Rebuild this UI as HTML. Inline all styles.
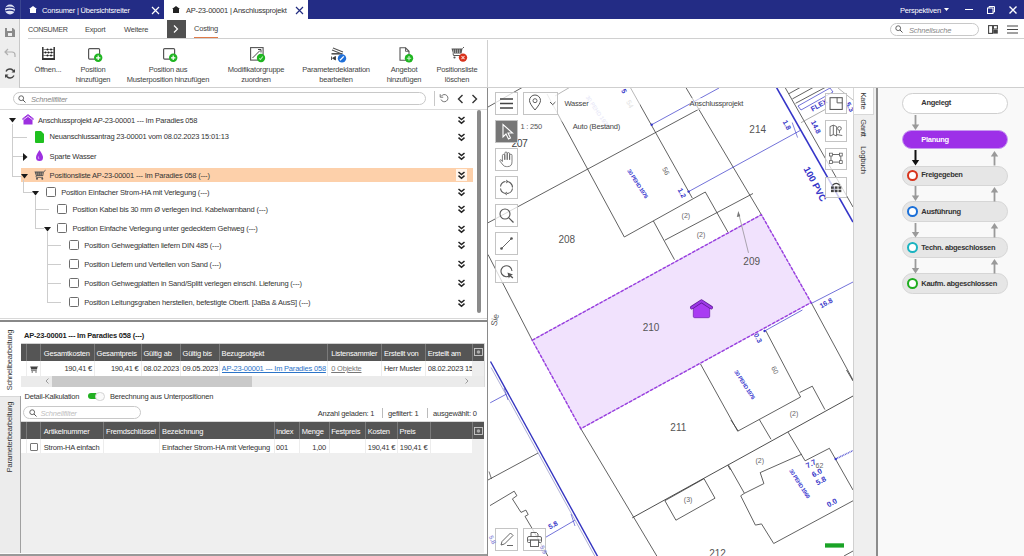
<!DOCTYPE html>
<html><head><meta charset="utf-8">
<style>
*{margin:0;padding:0;box-sizing:border-box}
html,body{width:1024px;height:556px;overflow:hidden;background:#fff;font-family:"Liberation Sans",sans-serif;color:#333;position:relative}
.a{position:absolute;white-space:nowrap}
.t{font-size:7.5px;letter-spacing:-0.2px;line-height:12.4px}
.tb{font-size:7.5px;letter-spacing:-0.2px;line-height:9.6px;text-align:center;color:#444;white-space:nowrap}
svg{position:absolute;overflow:visible}
</style></head><body>

<!-- TITLE BAR -->
<div class="a" style="left:0;top:0;width:1024px;height:19px;background:#232c85"></div>
<div class="a" style="left:164px;top:0;width:144px;height:19px;background:#fff"></div>
<div class="a" style="left:20px;top:0;width:1px;height:19px;background:#3a4590"></div>
<!-- globe logo -->
<svg style="left:0;top:0" width="20" height="19" viewBox="0 0 20 19">
 <circle cx="10" cy="9.5" r="5" fill="#dfe3f5"/>
 <path d="M5 8 Q10 6 15 8.5 M5.2 11 Q10 9 14.8 11.5" stroke="#232d80" stroke-width="1.1" fill="none"/>
</svg>
<svg style="left:28px;top:5px" width="10" height="9" viewBox="0 0 10 9"><path d="M1 4 L5 1 L9 4 L8 4 L8 8 L2 8 L2 4Z" fill="#fff"/></svg>
<div class="a t" style="left:42px;top:5px;color:#fff;font-size:7.5px">Consumer | Übersichtsreiter</div>
<svg style="left:151px;top:5.5px" width="9" height="9" viewBox="0 0 9 9"><path d="M1 1L8 8M8 1L1 8" stroke="#fff" stroke-width="1.2"/></svg>
<svg style="left:171px;top:5px" width="10" height="9" viewBox="0 0 10 9"><path d="M1 4 L5 1 L9 4 L8 4 L8 8 L2 8 L2 4Z" fill="#222"/></svg>
<div class="a t" style="left:186px;top:5px;color:#333;font-size:7.5px">AP-23-00001 | Anschlussprojekt</div>
<svg style="left:295px;top:5.5px" width="9" height="9" viewBox="0 0 9 9"><path d="M1 1L8 8M8 1L1 8" stroke="#232d80" stroke-width="1.2"/></svg>
<div class="a t" style="left:900px;top:5px;color:#fff;font-size:7.5px">Perspektiven</div>
<svg style="left:944px;top:8px" width="5" height="3"><path d="M0 0L5 0L2.5 3Z" fill="#fff"/></svg>
<div class="a" style="left:965px;top:9px;width:8px;height:1.3px;background:#fff"></div>
<svg style="left:987px;top:6px" width="8" height="8" viewBox="0 0 8 8"><rect x="0.5" y="2" width="5.5" height="5.5" fill="none" stroke="#fff" stroke-width="1"/><path d="M2 2V0.5H7.5V6H6" fill="none" stroke="#fff" stroke-width="1"/></svg>
<svg style="left:1009px;top:6px" width="8" height="8" viewBox="0 0 8 8"><path d="M0.5 0.5L7.5 7.5M7.5 0.5L0.5 7.5" stroke="#fff" stroke-width="1.4"/></svg>

<!-- LEFT COLUMN (toolbar) -->
<div class="a" style="left:0;top:19px;width:20px;height:69px;background:#eeeeee;border-right:1px solid #c8c8c8"></div>

<!-- RIBBON TABS -->
<div class="a t" style="left:28px;top:24px;font-size:7.2px;letter-spacing:-0.3px;color:#444">CONSUMER</div>
<div class="a t" style="left:85px;top:24px;font-size:7.5px;color:#444">Export</div>
<div class="a t" style="left:124px;top:24px;font-size:7.5px;color:#444">Weitere</div>
<div class="a" style="left:167px;top:20px;width:19px;height:18px;background:#505050"></div>
<svg style="left:173px;top:25px" width="6" height="8" viewBox="0 0 6 8"><path d="M1 0.5L4.5 4L1 7.5" stroke="#fff" stroke-width="1.2" fill="none"/></svg>
<div class="a t" style="left:194px;top:23px;font-size:7.5px;color:#444">Costing</div>
<div class="a" style="left:194px;top:37px;width:24px;height:2px;background:#e07a48"></div>
<div class="a" style="left:28px;top:38px;width:996px;height:1px;background:#d0d0d0"></div>
<div class="a" style="left:890px;top:22.5px;width:89px;height:13px;border:1px solid #c8c8c8;border-radius:7px;background:#fff"></div>
<div class="a t" style="left:909px;top:24.5px;color:#888;font-style:italic;font-size:7.5px">Schnellsuche</div>

<!-- TOOLBAR -->
<!-- left column icons -->
<svg style="left:4px;top:27px" width="12" height="11" viewBox="0 0 12 11"><path d="M1 1H9L11 3V10H1Z" fill="#8a8a8a"/><rect x="3" y="1" width="5" height="3" fill="#eee"/><rect x="4" y="6" width="4" height="3" fill="#eee"/></svg>
<svg style="left:4px;top:48px" width="12" height="10" viewBox="0 0 12 10"><path d="M4 1L1 4L4 7M1 4H8Q11 4 11 7V9" fill="none" stroke="#b0b0b0" stroke-width="1.2"/></svg>
<svg style="left:4px;top:67.5px" width="12" height="11" viewBox="0 0 12 11"><path d="M10 4A4.3 4.3 0 0 0 2 3.5M2 7A4.3 4.3 0 0 0 10 7.5" fill="none" stroke="#444" stroke-width="1.3"/><path d="M11 1V4.5H7.5Z M1 10V6.5H4.5Z" fill="#444"/></svg>

<!-- toolbar icons -->
<svg style="left:42px;top:47px" width="13" height="13" viewBox="0 0 13 13">
 <path d="M0.8 0V13 M12.2 0V13" stroke="#333" stroke-width="1.5"/><rect x="0" y="11" width="13" height="2" fill="#333"/>
 <path d="M1 2.5H12M1 5.5H12M1 8.5H12" stroke="#555" stroke-width="0.7"/>
 <circle cx="5.5" cy="2.5" r="1" fill="#222"/><circle cx="9" cy="2.5" r="1" fill="#222"/>
 <circle cx="3.5" cy="5.5" r="1" fill="#222"/><circle cx="6.5" cy="5.5" r="1" fill="#222"/><circle cx="9.5" cy="5.5" r="1" fill="#222"/>
 <circle cx="5.5" cy="8.5" r="1" fill="#222"/><circle cx="9" cy="8.5" r="1" fill="#222"/>
</svg>
<svg style="left:88px;top:48px" width="16" height="15" viewBox="0 0 16 15"><rect x="0.6" y="0.6" width="11" height="10.5" rx="1" fill="#fff" stroke="#555" stroke-width="1.2"/><circle cx="10.2" cy="9.8" r="4.2" fill="#1fb521"/><path d="M10.2 7.6V12M8 9.8H12.4" stroke="#fff" stroke-width="1.2"/></svg>
<svg style="left:163px;top:48px" width="16" height="15" viewBox="0 0 16 15"><rect x="0.6" y="0.6" width="11" height="10.5" rx="1" fill="#fff" stroke="#555" stroke-width="1.2"/><circle cx="10.2" cy="9.8" r="4.2" fill="#1fb521"/><path d="M10.2 7.6V12M8 9.8H12.4" stroke="#fff" stroke-width="1.2"/></svg>
<svg style="left:250px;top:46.5px" width="16" height="16" viewBox="0 0 16 16"><rect x="0.6" y="0.6" width="12.5" height="12.5" fill="#fff" stroke="#555" stroke-width="1.1"/><path d="M2.5 11L10 3.5M8 2.5H11V5.5" stroke="#444" stroke-width="1" fill="none"/><circle cx="11" cy="11" r="4.2" fill="#1fb521"/><path d="M9.3 11.3L10.5 12.5L12.8 9.5" stroke="#bff0bf" stroke-width="1.1" fill="none"/></svg>
<svg style="left:330px;top:46.5px" width="17" height="16" viewBox="0 0 17 16"><path d="M3 1L13 5M2 3L12 7" stroke="#555" stroke-width="1.1"/><rect x="1.5" y="6" width="11" height="1.6" fill="#555"/><path d="M1.5 9.5V13M5.5 9.5V13L2.5 11.2Z" fill="#333" stroke="#333" stroke-width="0.8"/><circle cx="12" cy="11.4" r="4.2" fill="#1e6fd9"/><path d="M10 13.2L13.8 9.4" stroke="#fff" stroke-width="1.3"/></svg>
<svg style="left:399px;top:46.5px" width="16" height="16" viewBox="0 0 16 16"><path d="M1 0.8H6.5L10 4.3V13.2H1Z" fill="#fff" stroke="#555" stroke-width="1.1"/><path d="M6.5 0.8V4.3H10" fill="none" stroke="#555" stroke-width="0.9"/><circle cx="10" cy="11.3" r="4.2" fill="#1fb521"/><path d="M10 9.1V13.5M7.8 11.3H12.2" stroke="#cdf5cd" stroke-width="1.1"/></svg>
<svg style="left:451px;top:47px" width="16" height="15" viewBox="0 0 16 15"><path d="M0.5 1.5H11.5L10.5 6.5H2Z" fill="#555"/><path d="M2.6 2.5V6M4.6 2.5V6M6.6 2.5V6M8.6 2.5V6" stroke="#ddd" stroke-width="0.6"/><path d="M11.5 1.5L13 0" stroke="#555" stroke-width="1"/><path d="M2 6.5L2.5 8.5H9" stroke="#555" stroke-width="1" fill="none"/><circle cx="3.5" cy="10.5" r="1.1" fill="#555"/><circle cx="12" cy="10.6" r="4.2" fill="#d8321c"/><path d="M10.5 9.1L13.5 12.1M13.5 9.1L10.5 12.1" stroke="#fbd0c8" stroke-width="1.1"/></svg>

<!-- toolbar labels -->
<div class="a tb" style="left:8px;top:65px;width:80px">Öffnen...</div>
<div class="a tb" style="left:53px;top:65px;width:80px">Position<br>hinzufügen</div>
<div class="a tb" style="left:108px;top:65px;width:120px">Position aus<br>Musterposition hinzufügen</div>
<div class="a tb" style="left:206px;top:65px;width:100px">Modifikatorgruppe<br>zuordnen</div>
<div class="a tb" style="left:286px;top:65px;width:100px">Parameterdeklaration<br>bearbeiten</div>
<div class="a tb" style="left:364px;top:65px;width:80px">Angebot<br>hinzufügen</div>
<div class="a tb" style="left:417px;top:65px;width:80px">Positionsliste<br>löschen</div>

<!-- ribbon right icons -->
<svg style="left:895px;top:25px" width="8" height="8" viewBox="0 0 8 8"><circle cx="3.2" cy="3.2" r="2.4" fill="none" stroke="#555" stroke-width="0.9"/><path d="M5 5L7.5 7.5" stroke="#555" stroke-width="1"/></svg>
<svg style="left:988px;top:24.5px" width="10" height="9" viewBox="0 0 10 9"><rect x="0.6" y="0.6" width="4" height="7.8" fill="none" stroke="#444" stroke-width="1.1"/><rect x="5.4" y="0.6" width="4" height="3.4" fill="none" stroke="#444" stroke-width="1.1"/><rect x="5.2" y="4.8" width="4.6" height="3.8" fill="#444"/></svg>
<svg style="left:1007px;top:24.5px" width="11" height="9" viewBox="0 0 11 9"><path d="M0 1H11M0 4.5H11M0 8H11" stroke="#444" stroke-width="1.2"/></svg>

<div class="a" style="left:20px;top:87px;width:1004px;height:1px;background:#cfcfcf"></div>
<div class="a" style="left:487px;top:40px;width:1px;height:47px;background:#cfcfcf"></div>

<!-- LEFT PANEL -->
<div class="a" style="left:0;top:109px;width:487px;height:1px;background:#dcdcdc"></div>
<div class="a" style="left:13px;top:92px;width:413px;height:13px;border:1px solid #c8c8c8;border-radius:7px"></div>
<div class="a t" style="left:31px;top:93.5px;color:#888;font-style:italic">Schnellfilter</div>


<!-- TREE -->
<div class="a" style="left:21px;top:168px;width:452px;height:14px;background:#fdd0aa"></div>
<div class="a" style="left:456px;top:169px;width:11px;height:12px;background:#fff5ec"></div>
<div class="a" style="left:12px;top:124px;width:1px;height:52px;background:#cdcdcd"></div>
<div class="a" style="left:12px;top:137px;width:15px;height:1px;background:#cdcdcd"></div>
<div class="a" style="left:12px;top:156px;width:11px;height:1px;background:#cdcdcd"></div>
<div class="a" style="left:12px;top:176px;width:9px;height:1px;background:#cdcdcd"></div>
<div class="a" style="left:23px;top:180px;width:1px;height:13px;background:#cdcdcd"></div>
<div class="a" style="left:23px;top:192px;width:10px;height:1px;background:#cdcdcd"></div>
<div class="a" style="left:35px;top:196px;width:1px;height:33px;background:#cdcdcd"></div>
<div class="a" style="left:35px;top:209px;width:14px;height:1px;background:#cdcdcd"></div>
<div class="a" style="left:35px;top:228px;width:9px;height:1px;background:#cdcdcd"></div>
<div class="a" style="left:47px;top:232px;width:1px;height:71px;background:#cdcdcd"></div>
<div class="a" style="left:47px;top:245px;width:14px;height:1px;background:#cdcdcd"></div>
<div class="a" style="left:47px;top:264px;width:14px;height:1px;background:#cdcdcd"></div>
<div class="a" style="left:47px;top:283px;width:14px;height:1px;background:#cdcdcd"></div>
<div class="a" style="left:47px;top:302px;width:14px;height:1px;background:#cdcdcd"></div>
<svg style="left:9px;top:118px" width="7" height="5" viewBox="0 0 7 5"><path d="M0 0H7L3.5 4.5Z" fill="#1a1a1a"/></svg>
<svg style="left:21px;top:174px" width="7" height="5" viewBox="0 0 7 5"><path d="M0 0H7L3.5 4.5Z" fill="#1a1a1a"/></svg>
<svg style="left:32px;top:190.5px" width="7" height="5" viewBox="0 0 7 5"><path d="M0 0H7L3.5 4.5Z" fill="#1a1a1a"/></svg>
<svg style="left:43.5px;top:226.5px" width="7" height="5" viewBox="0 0 7 5"><path d="M0 0H7L3.5 4.5Z" fill="#1a1a1a"/></svg>
<svg style="left:23px;top:152.5px" width="5" height="8" viewBox="0 0 5 8"><path d="M0 0V8L4.5 4Z" fill="#1a1a1a"/></svg>
<svg style="left:22px;top:114px" width="12" height="11" viewBox="0 0 12 11"><path d="M0 5.5L6 0.8L12 5.5L10.5 5.5V10.5H1.5V5.5Z" fill="#9d30e0"/><path d="M0.3 5L6 0.6L11.7 5" fill="none" stroke="#9d30e0" stroke-width="1"/><path d="M1.7 5.6L6 2.4L10.3 5.6" fill="none" stroke="#fff" stroke-width="0.8"/></svg>
<svg style="left:35px;top:130.5px" width="9" height="12" viewBox="0 0 9 12"><path d="M0 1Q0 0 1 0H6L9 3V11Q9 12 8 12H1Q0 12 0 11Z" fill="#1fc01f"/></svg>
<svg style="left:36px;top:150px" width="7" height="11" viewBox="0 0 7 11"><path d="M3.5 0Q7 5 7 7.5A3.5 3.5 0 0 1 0 7.5Q0 5 3.5 0Z" fill="#9d30e0"/><path d="M2.5 6.5Q2 8 3 9" stroke="#e7c8ff" stroke-width="0.7" fill="none"/></svg>
<svg style="left:33.5px;top:170px" width="12" height="10" viewBox="0 0 12 10"><path d="M0.5 1.5H10L9.2 6H2Z" fill="#555"/><path d="M2.8 2.5V5.2M4.8 2.5V5.2M6.8 2.5V5.2M8.6 2.5V5.2" stroke="#fdd0aa" stroke-width="0.5"/><path d="M10 1.5L11.5 0.3" stroke="#555" stroke-width="1"/><path d="M2 6L2.3 7.3H9" stroke="#555" stroke-width="0.9" fill="none"/><circle cx="3" cy="8.8" r="1" fill="#555"/><circle cx="8.3" cy="8.8" r="1" fill="#555"/></svg>
<div class="a" style="left:45.8px;top:187px;width:10px;height:10px;border:1px solid #6d6d6d;border-radius:1.5px;background:#fff"></div>
<div class="a" style="left:57.3px;top:203.8px;width:10px;height:10px;border:1px solid #6d6d6d;border-radius:1.5px;background:#fff"></div>
<div class="a" style="left:57.3px;top:223.3px;width:10px;height:10px;border:1px solid #6d6d6d;border-radius:1.5px;background:#fff"></div>
<div class="a" style="left:69.3px;top:240px;width:10px;height:10px;border:1px solid #6d6d6d;border-radius:1.5px;background:#fff"></div>
<div class="a" style="left:69.3px;top:259px;width:10px;height:10px;border:1px solid #6d6d6d;border-radius:1.5px;background:#fff"></div>
<div class="a" style="left:69.3px;top:278px;width:10px;height:10px;border:1px solid #6d6d6d;border-radius:1.5px;background:#fff"></div>
<div class="a" style="left:69.3px;top:297.3px;width:10px;height:10px;border:1px solid #6d6d6d;border-radius:1.5px;background:#fff"></div>
<div class="a t" style="left:38px;top:114.8px;color:#333">Anschlussprojekt AP-23-00001 --- Im Paradies 058</div>
<div class="a t" style="left:49.6px;top:131.3px;color:#333">Neuanschlussantrag 23-00001 vom 08.02.2023 15:01:13</div>
<div class="a t" style="left:49.6px;top:150.7px;color:#333">Sparte Wasser</div>
<div class="a t" style="left:49.6px;top:169.5px;color:#333">Positionsliste AP-23-00001 --- Im Paradies 058 (---)</div>
<div class="a t" style="left:61.2px;top:186.7px;color:#333">Position Einfacher Strom-HA mit Verlegung (---)</div>
<div class="a t" style="left:72.5px;top:203.8px;color:#333">Position Kabel bis 30 mm Ø verlegen incl. Kabelwarnband (---)</div>
<div class="a t" style="left:72.5px;top:223.0px;color:#333">Position Einfache Verlegung unter gedecktem Gehweg (---)</div>
<div class="a t" style="left:84.2px;top:239.5px;color:#333">Position Gehwegplatten liefern DIN 485 (---)</div>
<div class="a t" style="left:84.2px;top:258.7px;color:#333">Position Liefern und Verteilen von Sand (---)</div>
<div class="a t" style="left:84.2px;top:277.7px;color:#333">Position Gehwegplatten in Sand/Splitt verlegen einschl. Lieferung (---)</div>
<div class="a t" style="left:84.2px;top:297.0px;color:#333">Position Leitungsgraben herstellen, befestigte Oberfl. [JaBa &amp; AusS] (---)</div>
<svg style="left:457px;top:116.3px" width="9" height="9" viewBox="0 0 9 9"><path d="M1.5 1L4.5 3.6L7.5 1M1.5 4.6L4.5 7.2L7.5 4.6" fill="none" stroke="#222" stroke-width="1.5"/></svg>
<svg style="left:457px;top:132.8px" width="9" height="9" viewBox="0 0 9 9"><path d="M1.5 1L4.5 3.6L7.5 1M1.5 4.6L4.5 7.2L7.5 4.6" fill="none" stroke="#222" stroke-width="1.5"/></svg>
<svg style="left:457px;top:152.2px" width="9" height="9" viewBox="0 0 9 9"><path d="M1.5 1L4.5 3.6L7.5 1M1.5 4.6L4.5 7.2L7.5 4.6" fill="none" stroke="#222" stroke-width="1.5"/></svg>
<svg style="left:457px;top:171.0px" width="9" height="9" viewBox="0 0 9 9"><path d="M1.5 1L4.5 3.6L7.5 1M1.5 4.6L4.5 7.2L7.5 4.6" fill="none" stroke="#222" stroke-width="1.5"/></svg>
<svg style="left:457px;top:188.2px" width="9" height="9" viewBox="0 0 9 9"><path d="M1.5 1L4.5 3.6L7.5 1M1.5 4.6L4.5 7.2L7.5 4.6" fill="none" stroke="#222" stroke-width="1.5"/></svg>
<svg style="left:457px;top:205.3px" width="9" height="9" viewBox="0 0 9 9"><path d="M1.5 1L4.5 3.6L7.5 1M1.5 4.6L4.5 7.2L7.5 4.6" fill="none" stroke="#222" stroke-width="1.5"/></svg>
<svg style="left:457px;top:224.5px" width="9" height="9" viewBox="0 0 9 9"><path d="M1.5 1L4.5 3.6L7.5 1M1.5 4.6L4.5 7.2L7.5 4.6" fill="none" stroke="#222" stroke-width="1.5"/></svg>
<svg style="left:457px;top:241.0px" width="9" height="9" viewBox="0 0 9 9"><path d="M1.5 1L4.5 3.6L7.5 1M1.5 4.6L4.5 7.2L7.5 4.6" fill="none" stroke="#222" stroke-width="1.5"/></svg>
<svg style="left:457px;top:260.2px" width="9" height="9" viewBox="0 0 9 9"><path d="M1.5 1L4.5 3.6L7.5 1M1.5 4.6L4.5 7.2L7.5 4.6" fill="none" stroke="#222" stroke-width="1.5"/></svg>
<svg style="left:457px;top:279.2px" width="9" height="9" viewBox="0 0 9 9"><path d="M1.5 1L4.5 3.6L7.5 1M1.5 4.6L4.5 7.2L7.5 4.6" fill="none" stroke="#222" stroke-width="1.5"/></svg>
<svg style="left:457px;top:298.5px" width="9" height="9" viewBox="0 0 9 9"><path d="M1.5 1L4.5 3.6L7.5 1M1.5 4.6L4.5 7.2L7.5 4.6" fill="none" stroke="#222" stroke-width="1.5"/></svg>
<div class="a" style="left:476.5px;top:110px;width:4.5px;height:203px;border-radius:2.5px;background:#8a8a8a"></div>
<svg style="left:18px;top:95px" width="8" height="8" viewBox="0 0 8 8"><circle cx="3.2" cy="3.2" r="2.4" fill="none" stroke="#555" stroke-width="0.9"/><path d="M5 5L7.5 7.5" stroke="#555" stroke-width="1"/></svg>
<div class="a" style="left:434px;top:91px;width:1px;height:15px;background:#c8c8c8"></div>
<svg style="left:439px;top:93px" width="10" height="10" viewBox="0 0 10 10"><path d="M2.3 3.2A3.6 3.6 0 1 1 2 6.5" fill="none" stroke="#666" stroke-width="0.9"/><path d="M1.2 1.2V4.2H4.2" fill="none" stroke="#666" stroke-width="0.9"/></svg>
<svg style="left:456.5px;top:93.5px" width="7" height="10" viewBox="0 0 7 10"><path d="M5.5 1L1.5 5L5.5 9" fill="none" stroke="#333" stroke-width="1.4"/></svg>
<svg style="left:471px;top:93.5px" width="7" height="10" viewBox="0 0 7 10"><path d="M1.5 1L5.5 5L1.5 9" fill="none" stroke="#333" stroke-width="1.4"/></svg>

<!-- SPLITTER -->
<div class="a" style="left:0;top:318px;width:487px;height:1px;background:#d8d8d8"></div>
<div class="a" style="left:0;top:320px;width:487px;height:1.5px;background:#888"></div>


<!-- BOTTOM PANEL -->
<div class="a" style="left:0;top:321.5px;width:21px;height:234.5px;background:#ececec"></div>
<div class="a" style="left:0;top:321.5px;width:21px;height:75px;background:#fff"></div>
<div class="a" style="left:0;top:396px;width:21px;height:1px;background:#d8d8d8"></div>
<div class="a t" style="left:10.3px;top:359.8px;transform:translate(-50%,-50%) rotate(-90deg);color:#333">Schnellbearbeitung</div>
<div class="a t" style="left:10.3px;top:436.5px;transform:translate(-50%,-50%) rotate(-90deg);color:#333">Parameterbearbeitung</div>
<div class="a t" style="left:24px;top:330px;font-weight:bold;color:#222">AP-23-00001 --- Im Paradies 058 (---)</div>

<!-- grid 1 -->
<div class="a" style="left:21px;top:342.5px;width:463px;height:1.5px;background:#d0d0d0"></div>
<div class="a" style="left:21px;top:344px;width:463px;height:17px;background:#555"></div>
<div class="a" style="left:21px;top:361px;width:463px;height:14.5px;background:#fff"></div>
<div class="a" style="left:471.5px;top:361px;width:12.5px;height:14.5px;background:#eeeeee"></div>
<div class="a" style="left:21px;top:375.5px;width:463px;height:11px;background:#ebebeb"></div>
<div class="a" style="left:52px;top:375.5px;width:200px;height:11px;background:#c9c9c9"></div>
<div class="a" style="left:483.5px;top:343px;width:1.5px;height:44px;background:#dcdcdc"></div>
<svg style="left:45px;top:378px" width="4" height="6" viewBox="0 0 4 6"><path d="M3.5 0.5L1 3L3.5 5.5" fill="none" stroke="#888" stroke-width="0.8"/></svg>
<svg style="left:465px;top:378px" width="4" height="6" viewBox="0 0 4 6"><path d="M0.5 0.5L3 3L0.5 5.5" fill="none" stroke="#888" stroke-width="0.8"/></svg>
<div class="a" style="left:26px;top:344px;width:1px;height:17px;background:#7a7a7a"></div>
<div class="a" style="left:40.4px;top:344px;width:1px;height:17px;background:#7a7a7a"></div>
<div class="a" style="left:94.4px;top:344px;width:1px;height:17px;background:#7a7a7a"></div>
<div class="a" style="left:140.8px;top:344px;width:1px;height:17px;background:#7a7a7a"></div>
<div class="a" style="left:180px;top:344px;width:1px;height:17px;background:#7a7a7a"></div>
<div class="a" style="left:219.4px;top:344px;width:1px;height:17px;background:#7a7a7a"></div>
<div class="a" style="left:326.6px;top:344px;width:1px;height:17px;background:#7a7a7a"></div>
<div class="a" style="left:380.8px;top:344px;width:1px;height:17px;background:#7a7a7a"></div>
<div class="a" style="left:424.6px;top:344px;width:1px;height:17px;background:#7a7a7a"></div>
<div class="a" style="left:471.5px;top:344px;width:1px;height:17px;background:#7a7a7a"></div>
<div class="a" style="left:26px;top:361px;width:1px;height:14.5px;background:#ededed"></div>
<div class="a" style="left:40.4px;top:361px;width:1px;height:14.5px;background:#ededed"></div>
<div class="a" style="left:94.4px;top:361px;width:1px;height:14.5px;background:#ededed"></div>
<div class="a" style="left:140.8px;top:361px;width:1px;height:14.5px;background:#ededed"></div>
<div class="a" style="left:180px;top:361px;width:1px;height:14.5px;background:#ededed"></div>
<div class="a" style="left:219.4px;top:361px;width:1px;height:14.5px;background:#ededed"></div>
<div class="a" style="left:326.6px;top:361px;width:1px;height:14.5px;background:#ededed"></div>
<div class="a" style="left:380.8px;top:361px;width:1px;height:14.5px;background:#ededed"></div>
<div class="a" style="left:424.6px;top:361px;width:1px;height:14.5px;background:#ededed"></div>
<div class="a" style="left:471.5px;top:361px;width:1px;height:14.5px;background:#ededed"></div>
<div class="a t" style="left:43.8px;top:347.5px;color:#fff">Gesamtkosten</div>
<div class="a t" style="left:96.5px;top:347.5px;color:#fff">Gesamtpreis</div>
<div class="a t" style="left:143.4px;top:347.5px;color:#fff">Gültig ab</div>
<div class="a t" style="left:182.5px;top:347.5px;color:#fff">Gültig bis</div>
<div class="a t" style="left:221.6px;top:347.5px;color:#fff">Bezugsobjekt</div>
<div class="a t" style="left:331.2px;top:347.5px;color:#fff">Listensammler</div>
<div class="a t" style="left:383.9px;top:347.5px;color:#fff">Erstellt von</div>
<div class="a t" style="left:427.7px;top:347.5px;color:#fff">Erstellt am</div>
<svg style="left:473.5px;top:348px" width="9" height="8" viewBox="0 0 9 8"><rect x="0.5" y="0.5" width="8" height="7" fill="none" stroke="#ccc" stroke-width="0.9"/><circle cx="4.5" cy="4" r="1.8" fill="#aaa"/></svg>
<svg style="left:30px;top:365.5px" width="8" height="7" viewBox="0 0 8 7"><path d="M0.2 0.6H7.6L7 3.6H1.3Z" fill="#444"/><path d="M1.3 3.6L1.5 4.6H6.8" stroke="#444" stroke-width="0.7" fill="none"/><circle cx="2.2" cy="6" r="0.7" fill="#444"/><circle cx="6" cy="6" r="0.7" fill="#444"/><path d="M7.6 0.6L8 0" stroke="#444" stroke-width="0.6"/></svg>
<div class="a t" style="left:40px;top:363px;width:52px;text-align:right;color:#333">190,41 €</div>
<div class="a t" style="left:94px;top:363px;width:44.5px;text-align:right;color:#333">190,41 €</div>
<div class="a t" style="left:143.4px;top:363px;color:#333">08.02.2023</div>
<div class="a t" style="left:182.5px;top:363px;color:#333">09.05.2023</div>
<div class="a t" style="left:221.6px;top:363px;color:#2b74c8;text-decoration:underline;width:105px;overflow:hidden">AP-23-00001 --- Im Paradies 058</div>
<div class="a t" style="left:331.2px;top:363px;color:#777;text-decoration:underline">0 Objekte</div>
<div class="a t" style="left:383.9px;top:363px;color:#333">Herr Muster</div>
<div class="a t" style="left:427.7px;top:363px;color:#333;width:44px;overflow:hidden">08.02.2023 15:01</div>

<!-- detail row -->
<div class="a t" style="left:24.5px;top:391px;color:#333">Detail-Kalkulation</div>
<div class="a" style="left:87.5px;top:393.2px;width:13px;height:6.2px;border-radius:3.1px;background:#22b022"></div>
<div class="a" style="left:95px;top:391.6px;width:9.6px;height:9.6px;border-radius:50%;background:#fafafa;border:1px solid #d4d4d4"></div>
<div class="a t" style="left:110px;top:391px;color:#333">Berechnung aus Unterpositionen</div>
<div class="a" style="left:23px;top:406px;width:118px;height:12.5px;border:1px solid #c8c8c8;border-radius:6.5px;background:#fff"></div>
<svg style="left:28.5px;top:408.5px" width="8" height="8" viewBox="0 0 8 8"><circle cx="3.2" cy="3.2" r="2.4" fill="none" stroke="#555" stroke-width="0.9"/><path d="M5 5L7.5 7.5" stroke="#555" stroke-width="1"/></svg>
<div class="a t" style="left:40.5px;top:407.5px;color:#c0c0c0;font-style:italic">Schnellfilter</div>
<div class="a t" style="left:317.7px;top:408px;color:#333">Anzahl geladen: 1</div>
<div class="a" style="left:382px;top:408px;width:1px;height:10px;background:#bbb"></div>
<div class="a t" style="left:388px;top:408px;color:#333">gefiltert: 1</div>
<div class="a" style="left:427px;top:408px;width:1px;height:10px;background:#bbb"></div>
<div class="a t" style="left:433px;top:408px;color:#333">ausgewählt: 0</div>

<!-- grid 2 -->
<div class="a" style="left:21px;top:421px;width:463px;height:1px;background:#d8d8d8"></div>
<div class="a" style="left:21px;top:422px;width:463px;height:17px;background:#555"></div>
<div class="a" style="left:21px;top:439px;width:463px;height:117px;background:#efefef"></div>
<div class="a" style="left:21px;top:439px;width:450.5px;height:13.5px;background:#fff"></div>
<div class="a" style="left:0;top:553.5px;width:487px;height:2.5px;background:#999"></div>
<div class="a" style="left:19.8px;top:396px;width:1.6px;height:158px;background:#a0a0a0"></div>
<div class="a" style="left:0;top:552.5px;width:487px;height:1px;background:#fafafa"></div>
<div class="a" style="left:26px;top:422px;width:1px;height:17px;background:#7a7a7a"></div>
<div class="a" style="left:40.4px;top:422px;width:1px;height:17px;background:#7a7a7a"></div>
<div class="a" style="left:103px;top:422px;width:1px;height:17px;background:#7a7a7a"></div>
<div class="a" style="left:159px;top:422px;width:1px;height:17px;background:#7a7a7a"></div>
<div class="a" style="left:273.9px;top:422px;width:1px;height:17px;background:#7a7a7a"></div>
<div class="a" style="left:298.7px;top:422px;width:1px;height:17px;background:#7a7a7a"></div>
<div class="a" style="left:328.6px;top:422px;width:1px;height:17px;background:#7a7a7a"></div>
<div class="a" style="left:364.6px;top:422px;width:1px;height:17px;background:#7a7a7a"></div>
<div class="a" style="left:397px;top:422px;width:1px;height:17px;background:#7a7a7a"></div>
<div class="a" style="left:429.5px;top:422px;width:1px;height:17px;background:#7a7a7a"></div>
<div class="a" style="left:471.5px;top:422px;width:1px;height:17px;background:#7a7a7a"></div>
<div class="a" style="left:26px;top:439px;width:1px;height:13.5px;background:#ededed"></div>
<div class="a" style="left:40.4px;top:439px;width:1px;height:13.5px;background:#ededed"></div>
<div class="a" style="left:103px;top:439px;width:1px;height:13.5px;background:#ededed"></div>
<div class="a" style="left:159px;top:439px;width:1px;height:13.5px;background:#ededed"></div>
<div class="a" style="left:273.9px;top:439px;width:1px;height:13.5px;background:#ededed"></div>
<div class="a" style="left:298.7px;top:439px;width:1px;height:13.5px;background:#ededed"></div>
<div class="a" style="left:328.6px;top:439px;width:1px;height:13.5px;background:#ededed"></div>
<div class="a" style="left:364.6px;top:439px;width:1px;height:13.5px;background:#ededed"></div>
<div class="a" style="left:397px;top:439px;width:1px;height:13.5px;background:#ededed"></div>
<div class="a" style="left:429.5px;top:439px;width:1px;height:13.5px;background:#ededed"></div>
<div class="a t" style="left:43.8px;top:426px;color:#fff">Artikelnummer</div>
<div class="a t" style="left:106px;top:426px;color:#fff">Fremdschlüssel</div>
<div class="a t" style="left:162.1px;top:426px;color:#fff">Bezeichnung</div>
<div class="a t" style="left:276px;top:426px;color:#fff">Index</div>
<div class="a t" style="left:301.8px;top:426px;color:#fff">Menge</div>
<div class="a t" style="left:331.2px;top:426px;color:#fff">Festpreis</div>
<div class="a t" style="left:367.7px;top:426px;color:#fff">Kosten</div>
<div class="a t" style="left:399.5px;top:426px;color:#fff">Preis</div>
<svg style="left:473.5px;top:426.5px" width="9" height="8" viewBox="0 0 9 8"><rect x="0.5" y="0.5" width="8" height="7" fill="none" stroke="#ccc" stroke-width="0.9"/><circle cx="4.5" cy="4" r="1.8" fill="#aaa"/></svg>
<div class="a" style="left:30px;top:443px;width:7.5px;height:7.5px;border:1px solid #777;border-radius:1px;background:#fff"></div>
<div class="a t" style="left:43.8px;top:441.5px;color:#333">Strom-HA einfach</div>
<div class="a t" style="left:162.1px;top:441.5px;color:#333">Einfacher Strom-HA mit Verlegung</div>
<div class="a t" style="left:276px;top:441.5px;color:#333">001</div>
<div class="a t" style="left:298px;top:441.5px;width:28px;text-align:right;color:#333">1,00</div>
<div class="a t" style="left:367.7px;top:441.5px;color:#333">190,41 €</div>
<div class="a t" style="left:399.8px;top:441.5px;color:#333">190,41 €</div>

<!-- MAP -->
<div class="a" style="left:486.5px;top:88px;width:1.6px;height:468px;background:#8a8a8a"></div>

<!-- MAP CONTENT -->
<svg style="left:0;top:0" width="1024" height="556" viewBox="0 0 1024 556">
<defs><clipPath id="mc"><rect x="488" y="88" width="365" height="468"/></clipPath></defs>
<g clip-path="url(#mc)">
<path d="M532.2,340.2 L761.4,214.7 L811.1,302.5 L580.8,428.7Z" fill="#f1e2fd"/>
<path d="M488,107 L523,87" fill="none" stroke="#3a3a3a" stroke-width="0.8" />
<path d="M555,96 L572,86" fill="none" stroke="#3a3a3a" stroke-width="0.8" />
<path d="M488,222.8 L700.5,108.3" fill="none" stroke="#3a3a3a" stroke-width="0.8" />
<path d="M547,94 L624.3,237 L705.3,192" fill="none" stroke="#3a3a3a" stroke-width="0.8" />
<path d="M629.5,86 L692.3,198.1" fill="none" stroke="#3a3a3a" stroke-width="0.8" />
<path d="M685,86 L761.4,214.7" fill="none" stroke="#3a3a3a" stroke-width="0.8" />
<path d="M811.1,302.5 L853,380" fill="none" stroke="#3a3a3a" stroke-width="0.8" />
<path d="M653.4,221 L674.5,259.7" fill="none" stroke="#3a3a3a" stroke-width="0.8" />
<path d="M705.3,192 L727.9,232.1" fill="none" stroke="#3a3a3a" stroke-width="0.8" />
<path d="M664.8,240.2 L753,193.5" fill="none" stroke="#3a3a3a" stroke-width="0.8" />
<path d="M488,254.5 L532.2,340.2" fill="none" stroke="#3a3a3a" stroke-width="0.8" />
<path d="M580.8,428.7 L658,558" fill="none" stroke="#3a3a3a" stroke-width="0.8" />
<path d="M488,480 L538.1,453" fill="none" stroke="#3a3a3a" stroke-width="0.8" />
<path d="M490,505.6 L514.2,491.2 L516.9,495.7 L512.4,498.9 L521,512.4 L525.9,510.1 L528.2,514.6 L525,516.4 L532.2,528.6 L549,558" fill="none" stroke="#3a3a3a" stroke-width="0.8" />
<path d="M632.3,517.8 L853,396" fill="none" stroke="#3a3a3a" stroke-width="0.9" />
<path d="M700.5,364 L737.7,431.2 L800.6,397" fill="none" stroke="#3a3a3a" stroke-width="0.8" />
<path d="M765.7,330.5 L800.6,397" fill="none" stroke="#3a3a3a" stroke-width="0.8" />
<path d="M799.7,392.5 L812.3,386.2 L824.9,409.6" fill="none" stroke="#3a3a3a" stroke-width="0.8" />
<path d="M759.3,419.5 L771,439.3" fill="none" stroke="#3a3a3a" stroke-width="0.8" />
<path d="M788,432.1 L805.1,460.8 L829.4,448.3 L853,490" fill="none" stroke="#3a3a3a" stroke-width="0.8" />
<path d="M727.8,465.3 L730.5,470" fill="none" stroke="#3a3a3a" stroke-width="0.8" />
<path d="M846.5,370 L853,381" fill="none" stroke="#3a3a3a" stroke-width="0.8" />
<path d="M664.9,500.7 L704,478.7 L715,498.2 L675.9,520.2 L664.9,500.7" fill="none" stroke="#3a3a3a" stroke-width="0.8" />
<path d="M728.5,465.2 L744.4,493.3 L763.9,483.6 L760.2,472.6 L801.8,454.2" fill="none" stroke="#3a3a3a" stroke-width="0.8" />
<path d="M740.7,495.8 L755.4,525.1 L761.5,523.9 L773.7,543.5 L853.2,500.7" fill="none" stroke="#3a3a3a" stroke-width="0.8" />
<path d="M744.4,493.3 L740.7,495.8" fill="none" stroke="#3a3a3a" stroke-width="0.8" />
<path d="M730.9,420 L738.2,431" fill="none" stroke="#3a3a3a" stroke-width="0.8" />
<path d="M844,556 L853,551" fill="none" stroke="#3a3a3a" stroke-width="0.8" />
<path d="M789.1,93.6 L801,87" fill="none" stroke="#3a3a3a" stroke-width="0.8" />
<path d="M792.4,98.9 L814,87" fill="none" stroke="#3a3a3a" stroke-width="0.8" />
<path d="M795.6,103.3 L826,87" fill="none" stroke="#3a3a3a" stroke-width="0.8" />
<path d="M784.8,87 L818.3,146 L853,207" fill="none" stroke="#3a3a3a" stroke-width="0.8" />
<path d="M801,122.7 L826,109" fill="none" stroke="#888" stroke-width="0.7" />
<path d="M798,106 L830,88 L833,92 L801,110 L798,106" fill="none" stroke="#3535c8" stroke-width="0.7" />
<path d="M838,88 L853,100" fill="none" stroke="#888" stroke-width="0.6" />
<path d="M776.2,87 L853,222" fill="none" stroke="#3535c8" stroke-width="1.6" />
<path d="M490.5,361.5 L598.5,558" fill="none" stroke="#3333c0" stroke-width="1.4" />
<path d="M491.1,367.5 L597.5,561" fill="none" stroke="#7878b8" stroke-width="0.6" />
<path d="M651.7,124.7 L719,88" fill="none" stroke="#3535c8" stroke-width="0.7" />
<path d="M688.6,191.6 L800.9,130.1" fill="none" stroke="#3535c8" stroke-width="0.7" />
<path d="M792.2,122.5 L797.6,137.6" fill="none" stroke="#3535c8" stroke-width="0.6" />
<path d="M811,303.6 L853,282" fill="none" stroke="#3535c8" stroke-width="0.7" />
<path d="M764.6,331 L802.4,310" fill="none" stroke="#3535c8" stroke-width="0.7" />
<path d="M490.2,402.8 L506.3,394.2" fill="none" stroke="#3535c8" stroke-width="0.7" />
<path d="M504,388 L508,400" fill="none" stroke="#3535c8" stroke-width="0.6" />
<path d="M545.5,537.4 L574.8,520.3" fill="none" stroke="#3535c8" stroke-width="0.7" />
<path d="M571,514 L575,526" fill="none" stroke="#3535c8" stroke-width="0.6" />
<path d="M835.7,459 L853,450.6" fill="none" stroke="#3535c8" stroke-width="1.6" stroke-dasharray="1,0.7" opacity="0.8"/>
<circle cx="651.7" cy="124.7" r="1.2" fill="#3535c8"/>
<circle cx="688.6" cy="191.6" r="1.2" fill="#3535c8"/>
<circle cx="764.6" cy="331" r="1.2" fill="#3535c8"/>
<circle cx="835.7" cy="459" r="1.2" fill="#3535c8"/>
<path d="M489,471.5 L491.5,479" stroke="#3a3a3a" stroke-width="0.7"/>
<path d="M532.2,340.2 L761.4,214.7 L811.1,302.5 L580.8,428.7Z" fill="none" stroke="#a070d8" stroke-width="0.6"/><path d="M532.2,340.2 L761.4,214.7 L811.1,302.5 L580.8,428.7Z" fill="none" stroke="#9a3ee0" stroke-width="1.4" stroke-dasharray="3.4,1.4"/>
<path d="M738.8,214 L748.5,252.9" fill="none" stroke="#777" stroke-width="0.6" />
<path d="M738.3,211 L736.8,217 L740.3,216.2Z" fill="#777"/>
<path d="M693.3,306.5 L701.5,301.5 L709.7,306.5 V316.3 Q709.7,317.7 708.3,317.7 H694.7 Q693.3,317.7 693.3,316.3Z" fill="#a93cf2" stroke="#6a1fa8" stroke-width="0.7"/><path d="M691.8,307.6 L701.5,301.2 L711.2,307.6" fill="none" stroke="#5e1a96" stroke-width="3.6" stroke-linecap="round" stroke-linejoin="round"/><path d="M691.8,307.6 L701.5,301.2 L711.2,307.6" fill="none" stroke="#9d3ae6" stroke-width="2.2" stroke-linecap="round" stroke-linejoin="round"/>
<rect x="825" y="543.3" width="19" height="4.3" fill="#1aa326"/>
<path d="M558,88 L640,88 L640,112 L578,136 L558,118Z" fill="#fff" opacity="0.55"/>
</g>
</svg>
<div class="a" style="left:566.8px;top:239.5px;font-size:10px;color:#555;transform:translate(-50%,-50%) rotate(0deg);font-weight:normal;line-height:1;">208</div>
<div class="a" style="left:757.7px;top:129.5px;font-size:10px;color:#555;transform:translate(-50%,-50%) rotate(0deg);font-weight:normal;line-height:1;">214</div>
<div class="a" style="left:751.7px;top:262px;font-size:10px;color:#555;transform:translate(-50%,-50%) rotate(0deg);font-weight:normal;line-height:1;">209</div>
<div class="a" style="left:651px;top:327.8px;font-size:10px;color:#555;transform:translate(-50%,-50%) rotate(0deg);font-weight:normal;line-height:1;">210</div>
<div class="a" style="left:678.3px;top:428px;font-size:10px;color:#555;transform:translate(-50%,-50%) rotate(0deg);font-weight:normal;line-height:1;">211</div>
<div class="a" style="left:717.5px;top:554px;font-size:10px;color:#555;transform:translate(-50%,-50%) rotate(0deg);font-weight:normal;line-height:1;">212</div>
<div class="a" style="left:519.3px;top:142.5px;font-size:10.5px;color:#444;transform:translate(-50%,-50%);letter-spacing:-0.6px;line-height:1;">207</div>
<div class="a" style="left:685.9px;top:215px;font-size:7px;color:#666;transform:translate(-50%,-50%) rotate(0deg);font-weight:normal;line-height:1;">(2)</div>
<div class="a" style="left:701px;top:234px;font-size:7px;color:#666;transform:translate(-50%,-50%) rotate(0deg);font-weight:normal;line-height:1;">(2)</div>
<div class="a" style="left:794px;top:413px;font-size:7px;color:#666;transform:translate(-50%,-50%) rotate(0deg);font-weight:normal;line-height:1;">(2)</div>
<div class="a" style="left:759.8px;top:459.5px;font-size:7px;color:#666;transform:translate(-50%,-50%) rotate(0deg);font-weight:normal;line-height:1;">(2)</div>
<div class="a" style="left:759px;top:459.5px;font-size:7px;color:#555;transform:translate(-50%,-50%) rotate(0deg);font-weight:normal;line-height:1;"></div>
<div class="a" style="left:688.1px;top:499px;font-size:7px;color:#666;transform:translate(-50%,-50%) rotate(0deg);font-weight:normal;line-height:1;">(3)</div>
<div class="a" style="left:665.7px;top:171px;font-size:7px;color:#666;transform:translate(-50%,-50%) rotate(63deg);font-weight:normal;line-height:1;">56</div>
<div class="a" style="left:775.4px;top:369.5px;font-size:7px;color:#666;transform:translate(-50%,-50%) rotate(63deg);font-weight:normal;line-height:1;">60</div>
<div class="a" style="left:819.5px;top:465px;font-size:7px;color:#666;transform:translate(-50%,-50%) rotate(0deg);font-weight:normal;line-height:1;">62</div>
<div class="a" style="left:637.4px;top:183.9px;font-size:5.6px;letter-spacing:-0.35px;color:#4040d0;transform:translate(-50%,-50%) rotate(57deg);font-weight:bold;line-height:1;">30 PEHD 1976</div>
<div class="a" style="left:743.6px;top:385px;font-size:5.6px;letter-spacing:-0.35px;color:#4040d0;transform:translate(-50%,-50%) rotate(57deg);font-weight:bold;line-height:1;">30 PEHD 1976</div>
<div class="a" style="left:799.4px;top:484.2px;font-size:5.6px;letter-spacing:-0.35px;color:#4040d0;transform:translate(-50%,-50%) rotate(57deg);font-weight:bold;line-height:1;">30 PEHD 1969</div>
<div class="a" style="left:596.6px;top:111.7px;font-size:5.6px;color:#e4e4f6;transform:translate(-50%,-50%) rotate(56deg);font-weight:normal;line-height:1;">30 PEHD 1976</div>
<div class="a" style="left:814.9px;top:183.5px;font-size:9.5px;color:#3535c8;transform:translate(-50%,-50%) rotate(62deg);font-weight:bold;line-height:1;">100 PVC</div>
<div class="a" style="left:681.9px;top:193px;font-size:7px;color:#3535c8;transform:translate(-50%,-50%) rotate(63deg);font-weight:bold;line-height:1;">1.2</div>
<div class="a" style="left:786.8px;top:125px;font-size:7px;color:#3535c8;transform:translate(-50%,-50%) rotate(63deg);font-weight:bold;line-height:1;">1.8</div>
<div class="a" style="left:816.1px;top:127.3px;font-size:7px;color:#3535c8;transform:translate(-50%,-50%) rotate(63deg);font-weight:bold;line-height:1;">14.8</div>
<div class="a" style="left:818.8px;top:105px;font-size:7px;color:#3535c8;transform:translate(-50%,-50%) rotate(-30deg);font-weight:bold;line-height:1;">FLEX</div>
<div class="a" style="left:849.5px;top:106.5px;font-size:7px;color:#3535c8;transform:translate(-50%,-50%) rotate(63deg);font-weight:bold;line-height:1;">5.3</div>
<div class="a" style="left:826.2px;top:303px;font-size:7px;color:#3535c8;transform:translate(-50%,-50%) rotate(-28deg);font-weight:bold;line-height:1;">16.8</div>
<div class="a" style="left:758.2px;top:338.3px;font-size:7px;color:#3535c8;transform:translate(-50%,-50%) rotate(63deg);font-weight:bold;line-height:1;">0.3</div>
<div class="a" style="left:552.8px;top:524.5px;font-size:7px;color:#3535c8;transform:translate(-50%,-50%) rotate(-30deg);font-weight:bold;line-height:1;">5.8</div>
<div class="a" style="left:623.6px;top:90.5px;font-size:7px;color:#3535c8;transform:translate(-50%,-50%) rotate(63deg);font-weight:bold;line-height:1;">5</div>
<div class="a" style="left:630px;top:104.4px;font-size:7px;color:#e2e2e2;transform:translate(-50%,-50%) rotate(63deg);font-weight:normal;line-height:1;">54</div>
<div class="a" style="left:494.5px;top:320px;font-size:8.5px;color:#555;transform:translate(-50%,-50%) rotate(-78deg);font-weight:normal;line-height:1;">Sie</div>
<div class="a" style="left:811.1px;top:464.3px;font-size:7.5px;color:#3535c8;transform:translate(-50%,-50%) rotate(-28deg);font-weight:bold;line-height:1;">7.7</div>
<div class="a" style="left:816.5px;top:472.8px;font-size:7.5px;color:#3535c8;transform:translate(-50%,-50%) rotate(-28deg);font-weight:bold;line-height:1;">6.0</div>
<div class="a" style="left:821.4px;top:481.3px;font-size:7.5px;color:#3535c8;transform:translate(-50%,-50%) rotate(-28deg);font-weight:bold;line-height:1;">5.8</div>
<div class="a" style="left:832.4px;top:503.3px;font-size:7.5px;color:#3535c8;transform:translate(-50%,-50%) rotate(-28deg);font-weight:bold;line-height:1;">0.0</div>
<div class="a t" style="left:520.4px;top:121px;color:#555">1 : 250</div>
<div class="a t" style="left:564.5px;top:98px;color:#444">Wasser</div>
<div class="a t" style="left:572.8px;top:121.2px;color:#444">Auto (Bestand)</div>
<div class="a t" style="left:689.6px;top:98px;color:#444;background:rgba(255,255,255,0.6)">Anschlussprojekt</div>
<div class="a" style="left:495px;top:92.3px;width:23px;height:23px;border:1px solid #c4c4c4;background:rgba(255,255,255,0.75)"></div>
<svg style="left:495px;top:92.3px" width="23" height="23" viewBox="0 0 23 23"><path d="M5 7H18M5 11.5H18M5 16H18" stroke="#444" stroke-width="1.4"/></svg>
<div class="a" style="left:522.5px;top:92.3px;width:35px;height:23px;border:1px solid #c4c4c4;background:rgba(255,255,255,0.88)"></div>
<svg style="left:522.5px;top:92.3px" width="35" height="23" viewBox="0 0 35 23"><path d="M12 18 Q6.5 11.5 6.5 8.5A5.5 5.5 0 0 1 17.5 8.5Q17.5 11.5 12 18Z" fill="none" stroke="#555" stroke-width="1"/><circle cx="12" cy="8.7" r="2" fill="none" stroke="#555" stroke-width="0.9"/><path d="M27 10L29.7 12.7L32.4 10" fill="none" stroke="#555" stroke-width="1"/></svg>
<div class="a" style="left:495px;top:120.3px;width:23px;height:23px;border:1px solid #c4c4c4;background:#767676"></div>
<svg style="left:495px;top:120.3px" width="23" height="23" viewBox="0 0 23 23"><path d="M8 4.5V17L11 14L13.5 19L15.5 18L13 13H17.5Z" fill="none" stroke="#fff" stroke-width="1.1"/></svg>
<div class="a" style="left:495px;top:148.3px;width:23px;height:23px;border:1px solid #c4c4c4;background:rgba(255,255,255,0.75)"></div>
<svg style="left:495px;top:148.3px" width="23" height="23" viewBox="0 0 23 23"><path d="M7.4 13.5V7.6Q7.4 6.4 8.6 6.4Q9.8 6.4 9.8 7.6V11.8 M9.8 11.8V5.2Q9.8 4 11 4Q12.2 4 12.2 5.2V11.8 M12.2 11.8V5.8Q12.2 4.6 13.4 4.6Q14.6 4.6 14.6 5.8V11.8 M14.6 11.8V7.4Q14.6 6.2 15.8 6.2Q17 6.2 17 7.4V13.8Q17 18.6 12.5 18.6H11.5Q9.2 18.6 8 17L5 13.2Q4.4 12.2 5.4 11.8Q6.4 11.5 7.4 13.5" fill="#fff" stroke="#555" stroke-width="0.75" stroke-linejoin="round"/></svg>
<div class="a" style="left:495px;top:176.4px;width:23px;height:23px;border:1px solid #c4c4c4;background:rgba(255,255,255,0.75)"></div>
<svg style="left:495px;top:176.4px" width="23" height="23" viewBox="0 0 23 23"><path d="M11.5 5.5A6 6 0 0 1 17.5 11.5M17.5 12.5A6 6 0 0 1 11.5 17.5M10.5 17.5A6 6 0 0 1 5.5 12.5M5.5 10.5A6 6 0 0 1 10.5 5.5" fill="none" stroke="#555" stroke-width="1.1"/><path d="M11 4L13 5.5L11 7M12 16L10 17.5L12 19" fill="none" stroke="#555" stroke-width="0.8"/></svg>
<div class="a" style="left:495px;top:203.8px;width:23px;height:23px;border:1px solid #c4c4c4;background:rgba(255,255,255,0.75)"></div>
<svg style="left:495px;top:203.8px" width="23" height="23" viewBox="0 0 23 23"><circle cx="10" cy="10" r="5" fill="none" stroke="#555" stroke-width="1.1"/><path d="M13.8 13.8L18.5 18.5" stroke="#555" stroke-width="1.2"/></svg>
<div class="a" style="left:495px;top:231.7px;width:23px;height:23px;border:1px solid #c4c4c4;background:rgba(255,255,255,0.75)"></div>
<svg style="left:495px;top:231.7px" width="23" height="23" viewBox="0 0 23 23"><path d="M6.5 16.5L16.5 6.5" stroke="#555" stroke-width="0.9"/><circle cx="6.5" cy="16.5" r="1.3" fill="#555"/><circle cx="16.5" cy="6.5" r="1.3" fill="#555"/></svg>
<div class="a" style="left:495px;top:259.6px;width:23px;height:23px;border:1px solid #c4c4c4;background:rgba(255,255,255,0.75)"></div>
<svg style="left:495px;top:259.6px" width="23" height="23" viewBox="0 0 23 23"><path d="M15.5 15A5.5 5.5 0 1 1 17 11" fill="none" stroke="#555" stroke-width="1.1"/><path d="M12.5 12.5L13.8 18.5L15 16.5L17.5 18.5L18.3 17.5L16 15.5L18 14.5Z" fill="#555"/></svg>
<div class="a" style="left:495.3px;top:528.2px;width:23px;height:23px;border:1px solid #c4c4c4;background:rgba(255,255,255,0.75)"></div>
<svg style="left:495.3px;top:528.2px" width="23" height="23" viewBox="0 0 23 23"><path d="M6 17L7 13.5L15.5 5L18 7.5L9.5 16Z" fill="none" stroke="#555" stroke-width="0.9"/><path d="M12 17.5H18" stroke="#555" stroke-width="0.9"/></svg>
<div class="a" style="left:522.7px;top:528.2px;width:23px;height:23px;border:1px solid #c4c4c4;background:rgba(255,255,255,0.75)"></div>
<svg style="left:522.7px;top:528.2px" width="23" height="23" viewBox="0 0 23 23"><path d="M8 8.5V4.5H13.5L15 6V8.5" fill="none" stroke="#555" stroke-width="0.9"/><path d="M7.5 14.5H5.5Q4.5 14.5 4.5 13.5V10Q4.5 8.5 6 8.5H17Q18.5 8.5 18.5 10V13.5Q18.5 14.5 17.5 14.5H15.5" fill="none" stroke="#555" stroke-width="0.9"/><rect x="7.5" y="12" width="8" height="6.5" fill="#fff" stroke="#555" stroke-width="0.9"/><path d="M5 12H18" stroke="#555" stroke-width="0.7"/></svg>
<div class="a" style="left:825px;top:92.7px;width:22.3px;height:21.6px;border:1px solid #c4c4c4;background:rgba(255,255,255,0.75)"></div>
<svg style="left:825px;top:92.7px" width="22.3" height="21.6" viewBox="0 0 23 23"><rect x="5" y="5" width="13" height="12.5" fill="none" stroke="#555" stroke-width="1.1"/><path d="M12.5 5V10.5H18" fill="none" stroke="#555" stroke-width="1"/></svg>
<div class="a" style="left:825px;top:120.4px;width:22.3px;height:21.6px;border:1px solid #c4c4c4;background:rgba(255,255,255,0.75)"></div>
<svg style="left:825px;top:120.4px" width="22.3" height="21.6" viewBox="0 0 23 23"><path d="M5 7L8.5 5.5L12 7L12 17L8.5 15.5L5 17Z M8.5 5.5V15.5" fill="none" stroke="#555" stroke-width="0.9"/><circle cx="15" cy="9" r="2" fill="none" stroke="#555" stroke-width="0.9"/><path d="M15 11L15 14M12 15.5L18 16.5" fill="none" stroke="#555" stroke-width="0.9"/></svg>
<div class="a" style="left:825px;top:148.4px;width:22.3px;height:21.6px;border:1px solid #c4c4c4;background:rgba(255,255,255,0.75)"></div>
<svg style="left:825px;top:148.4px" width="22.3" height="21.6" viewBox="0 0 23 23"><rect x="6" y="7" width="10.5" height="8" fill="none" stroke="#555" stroke-width="0.9"/><rect x="4.5" y="5.5" width="3" height="3" fill="#fff" stroke="#555" stroke-width="0.8"/><rect x="15" y="5.5" width="3" height="3" fill="#fff" stroke="#555" stroke-width="0.8"/><rect x="4.5" y="13.5" width="3" height="3" fill="#fff" stroke="#555" stroke-width="0.8"/><rect x="15" y="13.5" width="3" height="3" fill="#fff" stroke="#555" stroke-width="0.8"/></svg>
<div class="a" style="left:825px;top:176.5px;width:22.3px;height:21.6px;border:1px solid #c4c4c4;background:rgba(255,255,255,0.75)"></div>
<svg style="left:825px;top:176.5px" width="22.3" height="21.6" viewBox="0 0 23 23"><path d="M7.5 9Q11.5 4.5 15.5 9" fill="none" stroke="#444" stroke-width="1.3"/><g fill="#444"><rect x="6" y="10" width="3" height="2.6"/><rect x="10" y="10" width="3" height="2.6"/><rect x="14" y="10" width="3" height="2.6"/><rect x="6" y="13.5" width="3" height="2.6"/><rect x="10" y="13.5" width="3" height="2.6"/><rect x="14" y="13.5" width="3" height="2.6"/></g></svg>

<div class="a" style="left:492px;top:540px;font-size:6.5px;color:#9a9ae0;transform:translate(-50%,-50%) rotate(63deg);line-height:1;font-weight:bold">5.8</div>
<div class="a" style="left:543px;top:550px;font-size:6.5px;color:#9a9ae0;transform:translate(-50%,-50%) rotate(63deg);line-height:1;font-weight:bold">5.9</div>
<!-- SIDE TABS -->
<div class="a" style="left:853px;top:88px;width:23px;height:468px;background:#efefef;border-left:1px solid #d0d0d0"></div>
<div class="a" style="left:876px;top:88px;width:1.6px;height:468px;background:#8c8c8c"></div>
<div class="a" style="left:878px;top:88px;width:146px;height:468px;background:#f9f9f9"></div>


<div class="a" style="left:853px;top:88px;width:21px;height:27px;background:#fff;border:1px solid #d8d8d8;border-top:none"></div>
<div class="a t" style="left:862.5px;top:101px;transform:translate(-50%,-50%) rotate(90deg);color:#333">Karte</div>
<div class="a t" style="left:862.5px;top:128px;transform:translate(-50%,-50%) rotate(90deg);color:#333">Gantt</div>
<div class="a t" style="left:862.5px;top:160px;transform:translate(-50%,-50%) rotate(90deg);color:#333">Logbuch</div>

<!-- STATUS FLOW -->
<div class="a" style="left:902px;top:93px;width:105.5px;height:21px;border-radius:10.5px;background:#fff;border:1.2px solid #cfcfcf"></div>
<div class="a t" style="left:921.3px;top:97.3px;color:#333;font-weight:bold;font-size:7.5px;letter-spacing:-0.3px">Angelegt</div>
<div class="a" style="left:902px;top:130.3px;width:105.5px;height:18.899999999999977px;border-radius:9.449999999999989px;background:#9d30e8;border:1.2px solid #c79af0"></div>
<div class="a t" style="left:921.3px;top:133.55px;color:#fff;font-weight:bold;font-size:7.5px;letter-spacing:-0.3px">Planung</div>
<div class="a" style="left:902px;top:165.6px;width:105.5px;height:20.099999999999994px;border-radius:10.049999999999997px;background:#e6e6e6;border:1.2px solid #d6d6d6"></div>
<div class="a" style="left:906.7px;top:170.14999999999998px;width:11px;height:11px;border-radius:50%;border:2.3px solid #d8341c;background:#fff"></div>
<div class="a t" style="left:921.3px;top:169.45px;color:#333;font-weight:bold;font-size:7.5px;letter-spacing:-0.3px">Freigegeben</div>
<div class="a" style="left:902px;top:201.3px;width:105.5px;height:20.899999999999977px;border-radius:10.449999999999989px;background:#e6e6e6;border:1.2px solid #d6d6d6"></div>
<div class="a" style="left:906.7px;top:206.25px;width:11px;height:11px;border-radius:50%;border:2.3px solid #1a6fd8;background:#fff"></div>
<div class="a t" style="left:921.3px;top:205.55px;color:#333;font-weight:bold;font-size:7.5px;letter-spacing:-0.3px">Ausführung</div>
<div class="a" style="left:902px;top:237.1px;width:105.5px;height:21.200000000000017px;border-radius:10.600000000000009px;background:#e6e6e6;border:1.2px solid #d6d6d6"></div>
<div class="a" style="left:906.7px;top:242.2px;width:11px;height:11px;border-radius:50%;border:2.3px solid #1ab3c0;background:#fff"></div>
<div class="a t" style="left:921.3px;top:241.5px;color:#333;font-weight:bold;font-size:7.5px;letter-spacing:-0.3px">Techn. abgeschlossen</div>
<div class="a" style="left:902px;top:273.4px;width:105.5px;height:20.900000000000034px;border-radius:10.450000000000017px;background:#e6e6e6;border:1.2px solid #d6d6d6"></div>
<div class="a" style="left:906.7px;top:278.35px;width:11px;height:11px;border-radius:50%;border:2.3px solid #1fae1f;background:#fff"></div>
<div class="a t" style="left:921.3px;top:277.65000000000003px;color:#333;font-weight:bold;font-size:7.5px;letter-spacing:-0.3px">Kaufm. abgeschlossen</div>
<svg style="left:910.5px;top:114.5px" width="9" height="15.0" viewBox="0 0 9 15.0"><path d="M4.5 0V11.0" stroke="#9a9a9a" stroke-width="1.8"/><path d="M0.8 9.5L4.5 15.0L8.2 9.5Z" fill="#9a9a9a"/></svg>
<svg style="left:910.5px;top:149.5px" width="9" height="15.5" viewBox="0 0 9 15.5"><path d="M4.5 0V11.5" stroke="#111" stroke-width="2"/><path d="M0.8 10.0L4.5 15.5L8.2 10.0Z" fill="#111"/></svg>
<svg style="left:910.5px;top:186px" width="9" height="15" viewBox="0 0 9 15"><path d="M4.5 0V11" stroke="#9a9a9a" stroke-width="1.8"/><path d="M0.8 9.5L4.5 15L8.2 9.5Z" fill="#9a9a9a"/></svg>
<svg style="left:910.5px;top:222.5px" width="9" height="14.5" viewBox="0 0 9 14.5"><path d="M4.5 0V10.5" stroke="#9a9a9a" stroke-width="1.8"/><path d="M0.8 9.0L4.5 14.5L8.2 9.0Z" fill="#9a9a9a"/></svg>
<svg style="left:910.5px;top:258.5px" width="9" height="14.5" viewBox="0 0 9 14.5"><path d="M4.5 0V10.5" stroke="#9a9a9a" stroke-width="1.8"/><path d="M0.8 9.0L4.5 14.5L8.2 9.0Z" fill="#9a9a9a"/></svg>
<svg style="left:989.8px;top:151px" width="9" height="14.5" viewBox="0 0 9 14.5"><path d="M4.5 14.5V4" stroke="#9a9a9a" stroke-width="1.8"/><path d="M0.8 5.5L4.5 0L8.2 5.5Z" fill="#9a9a9a"/></svg>
<svg style="left:989.8px;top:187px" width="9" height="14.5" viewBox="0 0 9 14.5"><path d="M4.5 14.5V4" stroke="#9a9a9a" stroke-width="1.8"/><path d="M0.8 5.5L4.5 0L8.2 5.5Z" fill="#9a9a9a"/></svg>
<svg style="left:989.8px;top:223px" width="9" height="14.5" viewBox="0 0 9 14.5"><path d="M4.5 14.5V4" stroke="#9a9a9a" stroke-width="1.8"/><path d="M0.8 5.5L4.5 0L8.2 5.5Z" fill="#9a9a9a"/></svg>
<svg style="left:989.8px;top:259px" width="9" height="14.5" viewBox="0 0 9 14.5"><path d="M4.5 14.5V4" stroke="#9a9a9a" stroke-width="1.8"/><path d="M0.8 5.5L4.5 0L8.2 5.5Z" fill="#9a9a9a"/></svg>
</body></html>
